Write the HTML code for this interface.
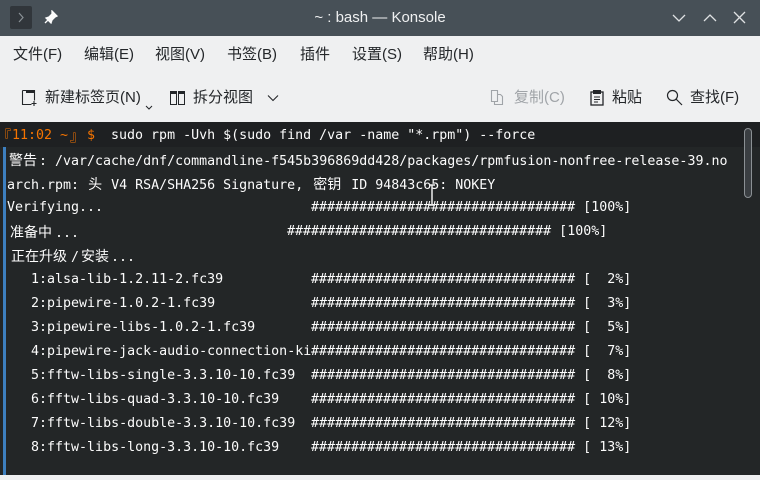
<!DOCTYPE html>
<html><head><meta charset="utf-8"><style>
*{margin:0;padding:0;box-sizing:border-box}
body{width:760px;height:480px;overflow:hidden;background:#eff0f1;position:relative;font-family:"Liberation Sans","Noto Sans CJK SC",sans-serif}
.a{position:absolute;white-space:nowrap}
#title{left:0;top:0;width:760px;height:36px;background:#475057}
.ui{font-size:15px;color:#232629;line-height:20px}
#term{left:0;top:122px;width:760px;height:353px;background:#232627}
#row1{left:0;top:122px;width:760px;height:25px;background:#1e2022}
#bar{left:3px;top:147px;width:3px;height:328px;background:#3d7fbf}
.t{font-family:"DejaVu Sans Mono",monospace;font-size:13.3px;color:#fcfcfc;line-height:24px;height:24px;left:7px;white-space:pre}
.c{display:inline-block;font-family:"Noto Sans CJK SC",sans-serif;font-size:14px;text-align:center;line-height:24px;vertical-align:baseline}
.c1{width:16px}.c2{width:32px}.c3{width:48px}.c4{width:64px}
.h{position:absolute;left:304px;top:0}
.o{color:#f67400}
</style></head><body>
<div id="title" class="a"></div>
<div class="a" style="left:10px;top:6px;width:22px;height:23px;background:#31363b;border-radius:2px"></div>
<svg class="a" style="left:10px;top:6px" width="22" height="23"><path d="M9 7l4 4.5-4 4.5" stroke="#8a9196" stroke-width="1.2" fill="none"/></svg>
<svg class="a" style="left:44px;top:10px" width="14" height="14"><path d="M8 1l5 5-2 1-3 3-1 3-5-5 3-1 3-3z M4 10l-3 3" stroke="#fcfcfc" stroke-width="1.3" fill="#fcfcfc"/></svg>
<div class="a" style="left:0;width:760px;top:8px;text-align:center;color:#eff0f1;font-size:15px;line-height:20px">~ : bash — Konsole</div>
<svg class="a" style="left:672px;top:10px" width="80" height="16"><path d="M1 5l6 6 6-6" stroke="#dfe1e3" stroke-width="1.3" fill="none"/><path d="M32 11l6-6 6 6" stroke="#dfe1e3" stroke-width="1.3" fill="none"/><path d="M62 2l11 11M73 2l-11 11" stroke="#dfe1e3" stroke-width="1.3" fill="none"/></svg>

<div class="a ui" style="left:13px;top:45px">文件(F)</div>
<div class="a ui" style="left:84px;top:45px">编辑(E)</div>
<div class="a ui" style="left:155px;top:45px">视图(V)</div>
<div class="a ui" style="left:227px;top:45px">书签(B)</div>
<div class="a ui" style="left:300px;top:45px">插件</div>
<div class="a ui" style="left:352px;top:45px">设置(S)</div>
<div class="a ui" style="left:423px;top:45px">帮助(H)</div>

<svg class="a" style="left:21px;top:89px" width="16" height="18"><path d="M1.5 1.5h12v10M1.5 1.5v14h9" stroke="#232629" stroke-width="1.1" fill="none"/><rect x="5" y="1" width="9" height="3" fill="#232629"/><path d="M13 12v5M10.5 14.5h5" stroke="#232629" stroke-width="1.1"/></svg>
<div class="a ui" style="left:45px;top:88px">新建标签页(N)</div>
<svg class="a" style="left:145px;top:105px" width="8" height="6"><path d="M1 1l3 3 3-3" stroke="#232629" fill="none"/></svg>
<svg class="a" style="left:170px;top:90px" width="16" height="16"><rect x="0.5" y="1.5" width="6" height="13" stroke="#232629" fill="none"/><rect x="8.5" y="1.5" width="6" height="13" stroke="#232629" fill="none"/><rect x="0" y="1" width="7" height="3" fill="#232629"/><rect x="8" y="1" width="7" height="3" fill="#232629"/></svg>
<div class="a ui" style="left:193px;top:88px">拆分视图</div>
<svg class="a" style="left:267px;top:94px" width="12" height="8"><path d="M1 1.5l5 5 5-5" stroke="#232629" stroke-width="1.1" fill="none"/></svg>

<svg class="a" style="left:490px;top:89px" width="14" height="17"><path d="M1.5 1.5h6v11h-6z M7.5 5.5h3l2 2v8h-8v-3" stroke="#a0a4a8" stroke-width="1.1" fill="none"/></svg>
<div class="a ui" style="left:514px;top:88px;color:#a0a4a8">复制(C)</div>
<svg class="a" style="left:590px;top:89px" width="14" height="17"><rect x="1" y="3" width="12" height="13" stroke="#232629" stroke-width="1.3" fill="none"/><rect x="3" y="1" width="8" height="4" fill="#232629"/><path d="M4 8h6M4 10.5h6M4 13h4" stroke="#232629"/></svg>
<div class="a ui" style="left:612px;top:88px">粘贴</div>
<svg class="a" style="left:666px;top:89px" width="18" height="18"><circle cx="6.5" cy="6.5" r="5" stroke="#232629" stroke-width="1.2" fill="none"/><path d="M10 10l6 6" stroke="#232629" stroke-width="1.2"/></svg>
<div class="a ui" style="left:690px;top:88px">查找(F)</div>

<div id="term" class="a"></div>
<div id="row1" class="a"></div>
<div id="bar" class="a"></div>
<div class="a" style="left:744px;top:128px;width:8px;height:70px;border:1px solid #8b9094;border-radius:4px;background:#3a3e42"></div>

<div class="a t o" style="top:124px;left:-3px"><span class="c" style="width:12px">『</span></div>
<div class="a t o" style="top:124px;left:12px">11:02 ~</div>
<div class="a t o" style="top:124px;left:70px"><span class="c" style="width:12px">』</span></div>
<div class="a t" style="top:124px;left:87px"><span class="o">$</span>  sudo rpm -Uvh $(sudo find /var -name "*.rpm") --force</div>
<div class="a t" style="top:148px"><span class="c c2">警告</span>: /var/cache/dnf/commandline-f545b396869dd428/packages/rpmfusion-nonfree-release-39.no</div>
<div class="a t" style="top:172px">arch.rpm: <span class="c c1">头</span> V4 RSA/SHA256 Signature, <span class="c c2">密钥</span> ID 94843c65: NOKEY</div>
<div class="a t" style="top:196px">Verifying...<span class="h">################################# [100%]</span></div>
<div class="a t" style="top:220px"><span class="c c3">准备中</span>...<span class="h" style="left:280px">################################# [100%]</span></div>
<div class="a t" style="top:244px"><span class="c c4">正在升级</span>/<span class="c c2">安装</span>...</div>
<div class="a t" style="top:268px">   1:alsa-lib-1.2.11-2.fc39<span class="h">################################# [  2%]</span></div>
<div class="a t" style="top:292px">   2:pipewire-1.0.2-1.fc39<span class="h">################################# [  3%]</span></div>
<div class="a t" style="top:316px">   3:pipewire-libs-1.0.2-1.fc39<span class="h">################################# [  5%]</span></div>
<div class="a t" style="top:340px">   4:pipewire-jack-audio-connection-ki<span class="h">################################# [  7%]</span></div>
<div class="a t" style="top:364px">   5:fftw-libs-single-3.3.10-10.fc39<span class="h">################################# [  8%]</span></div>
<div class="a t" style="top:388px">   6:fftw-libs-quad-3.3.10-10.fc39<span class="h">################################# [ 10%]</span></div>
<div class="a t" style="top:412px">   7:fftw-libs-double-3.3.10-10.fc39<span class="h">################################# [ 12%]</span></div>
<div class="a t" style="top:436px">   8:fftw-libs-long-3.3.10-10.fc39<span class="h">################################# [ 13%]</span></div>
<svg class="a" style="left:427px;top:184px" width="10" height="22"><path d="M2 1h6M5 1v20M2 21h6" stroke="#eee" stroke-width="1.5"/></svg>
</body></html>
